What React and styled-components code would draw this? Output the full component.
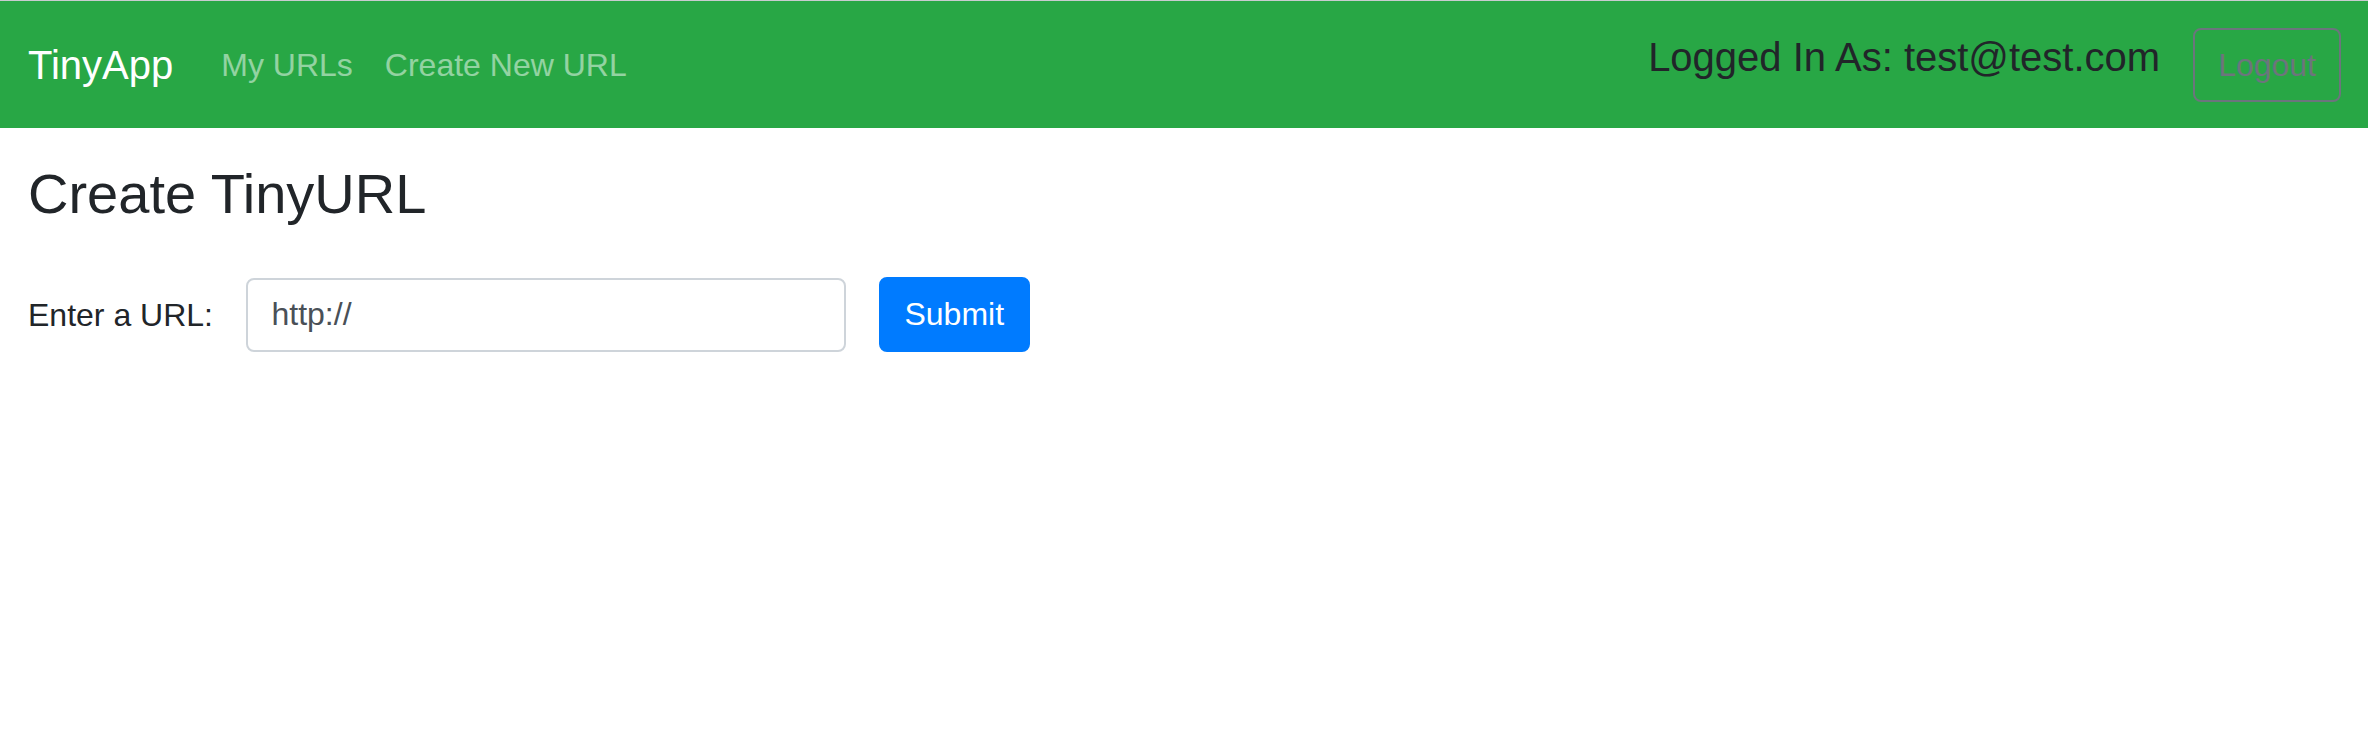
import React from 'react'
import styled, {createGlobalStyle} from "styled-components";

const GlobalStyle = createGlobalStyle`
  html, body {
    margin: 0;
    padding: 0;
    background: #fff;
  }
  body {
    font-family: "Liberation Sans", Arial, sans-serif;
    color: #212529;
  }
`;

function App() {
  return (
    <>
      <GlobalStyle />
      <Navbar>
        <Brand href="#">TinyApp</Brand>
        <NavLinks>
          <NavLink href="#">My URLs</NavLink>
          <NavLink href="#">Create New URL</NavLink>
        </NavLinks>
        <UserArea>
          <LoggedIn>Logged In As: test@test.com</LoggedIn>
          <OutlineButton type="button">Logout</OutlineButton>
        </UserArea>
      </Navbar>
      <Main>
        <Title>Create TinyURL</Title>
        <UrlForm onSubmit={(e) => e.preventDefault()}>
          <Label htmlFor="longURL">Enter a URL:</Label>
          <UrlInput id="longURL" type="text" defaultValue="http://" />
          <SubmitButton type="submit">Submit</SubmitButton>
        </UrlForm>
      </Main>
    </>
  )
}

const Navbar = styled.nav`
  display: flex;
  align-items: center;
  height: 127px;
  padding: 0 27px 0 28px;
  background-color: #28a745;
  border-top: 1px solid #c9cccf;
`;

const Brand = styled.a`
  font-size: 40px;
  line-height: 1.5;
  color: #fff;
  text-decoration: none;
  margin-right: 32px;
  white-space: nowrap;
`;

const NavLinks = styled.div`
  display: flex;
  align-items: center;
`;

const NavLink = styled.a`
  font-size: 32px;
  line-height: 1.5;
  padding: 0 16px;
  color: rgba(255, 255, 255, 0.5);
  text-decoration: none;
  white-space: nowrap;
`;

const UserArea = styled.div`
  margin-left: auto;
  display: flex;
  align-items: center;
`;

const LoggedIn = styled.span`
  font-size: 40px;
  line-height: 1.5;
  color: #212529;
  margin-right: 33px;
  margin-bottom: 16px;
  white-space: nowrap;
`;

const OutlineButton = styled.button`
  font-family: inherit;
  font-size: 32px;
  line-height: 1.5;
  padding: 11px 23px;
  color: #6c757d;
  background: transparent;
  border: 2px solid #6c757d;
  border-radius: 8px;
  cursor: pointer;
`;

const Main = styled.main`
  padding: 32px 28px;
`;

const Title = styled.h3`
  margin: 0 0 50px;
  font-size: 56px;
  font-weight: 400;
  line-height: 1.2;
  color: #212529;
`;

const UrlForm = styled.form`
  display: flex;
  align-items: center;
`;

const Label = styled.label`
  font-size: 32px;
  line-height: 1.5;
  margin-right: 33px;
  color: #212529;
`;

const UrlInput = styled.input`
  box-sizing: border-box;
  width: 600px;
  height: 74px;
  padding: 0 23.5px;
  font-family: inherit;
  font-size: 32px;
  color: #495057;
  border: 2px solid #ced4da;
  border-radius: 8px;
  outline: none;
`;

const SubmitButton = styled.button`
  box-sizing: border-box;
  margin-left: 33px;
  height: 75px;
  padding: 0 23.5px;
  font-family: inherit;
  font-size: 32px;
  color: #fff;
  background-color: #007bff;
  border: 2px solid #007bff;
  border-radius: 8px;
  cursor: pointer;
`;

export default App;
